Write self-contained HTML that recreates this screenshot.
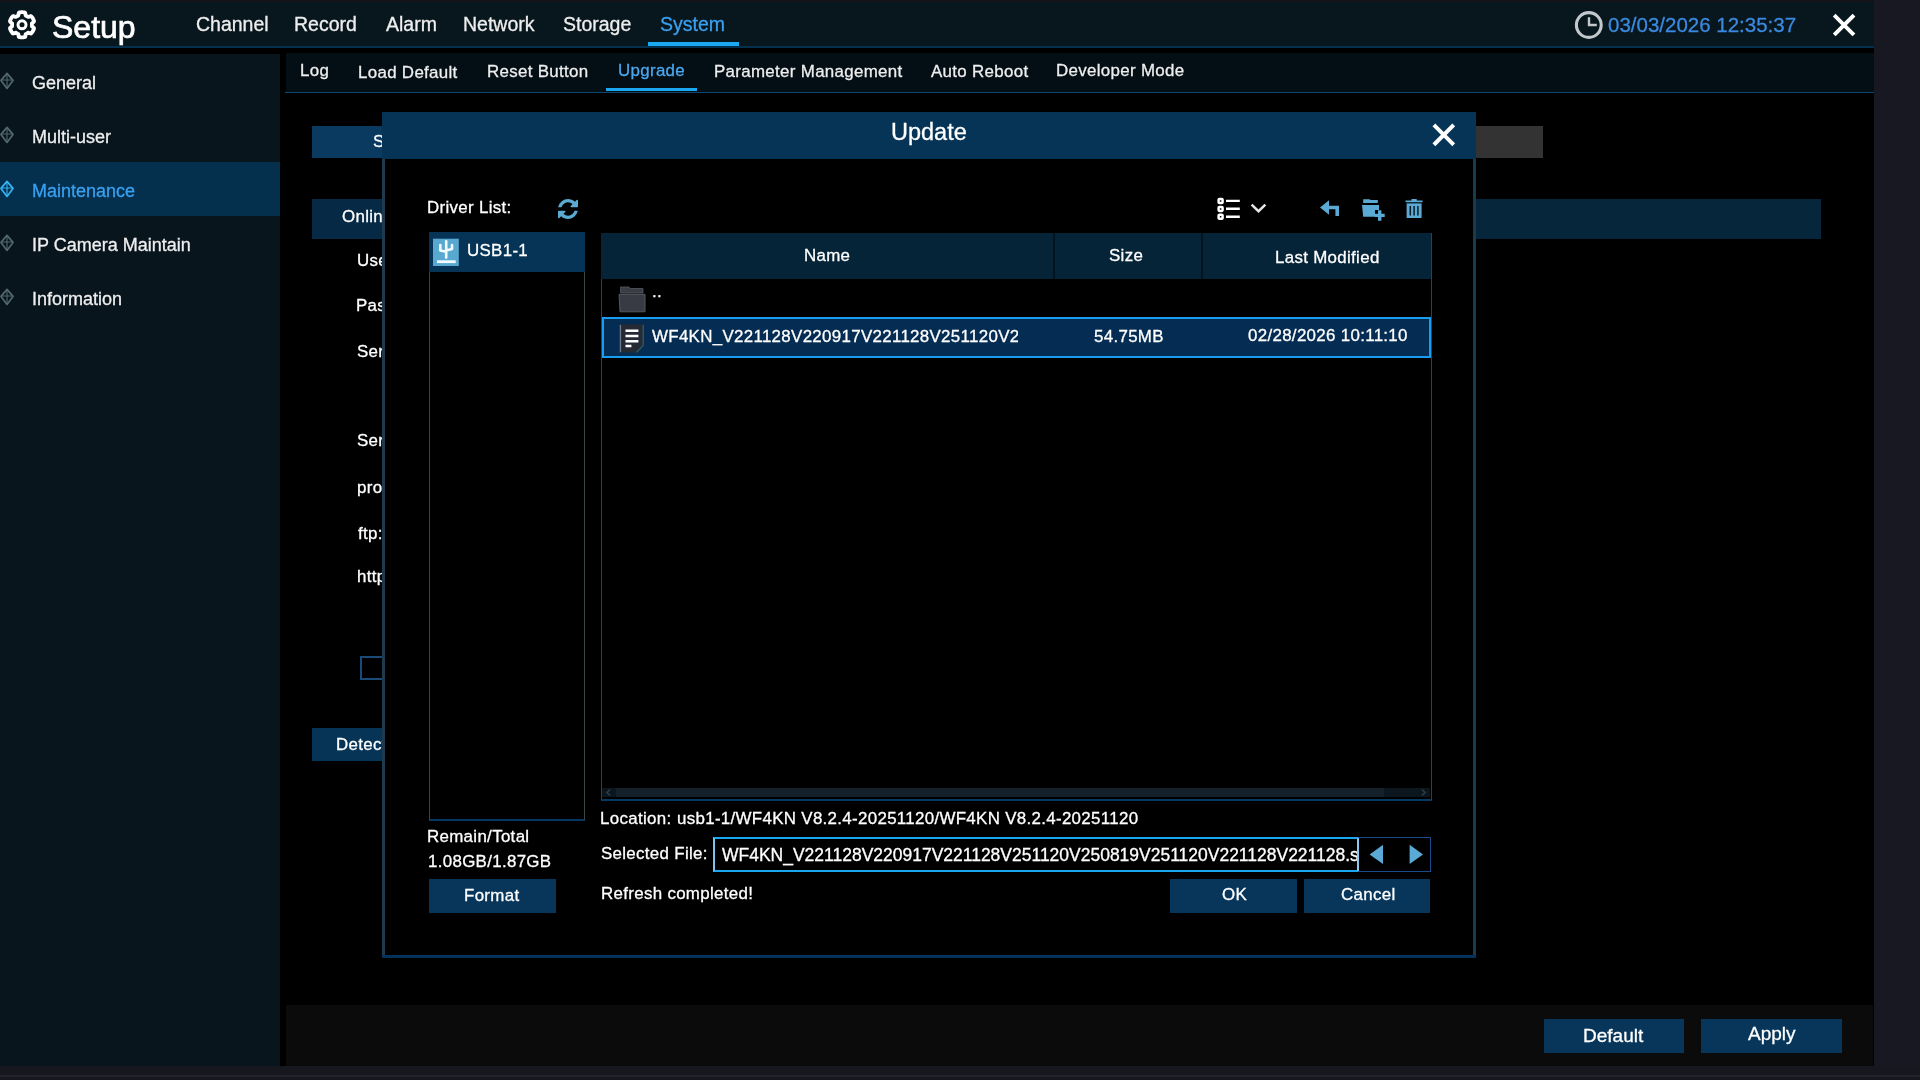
<!DOCTYPE html>
<html><head><meta charset="utf-8"><style>
html,body{margin:0;padding:0;width:1920px;height:1080px;overflow:hidden;background:#000}
body{position:relative;font-family:"Liberation Sans",sans-serif}
.t{position:absolute;white-space:pre;line-height:normal;will-change:transform}
svg{position:absolute;overflow:visible}
</style></head><body>
<div style="position:absolute;left:0px;top:0px;width:1920px;height:2px;background:#16121a;"></div>
<div style="position:absolute;left:0px;top:2px;width:1874px;height:44px;background:#08161d;"></div>
<div style="position:absolute;left:0px;top:46px;width:1874px;height:2px;background:#03304f;"></div>
<div style="position:absolute;left:1874px;top:0px;width:46px;height:1080px;background:#171822;"></div>
<div style="position:absolute;left:0px;top:54px;width:280px;height:1012px;background:#08151c;"></div>
<div style="position:absolute;left:0px;top:162px;width:280px;height:54px;background:#04304d;"></div>
<div style="position:absolute;left:286px;top:53px;width:1588px;height:39px;background:#040e15;"></div>
<div style="position:absolute;left:285px;top:92px;width:1589px;height:1px;background:#0d4672;"></div>
<div style="position:absolute;left:286px;top:1005px;width:1587px;height:61px;background:#0b0b0b;"></div>
<div style="position:absolute;left:0px;top:1066px;width:1920px;height:14px;background:#17171f;"></div>
<div style="position:absolute;left:0px;top:1075px;width:1920px;height:2px;background:#23232c;"></div>
<div class="t" style="left:52.20px;top:9.04px;font-size:32px;color:#ffffff;-webkit-text-stroke:0.3px #ffffff;letter-spacing:0px;-webkit-text-stroke:0.7px #fff">Setup</div>
<div class="t" style="left:195.89px;top:12.95px;font-size:19.5px;color:#eeeeee;-webkit-text-stroke:0.3px #eeeeee;letter-spacing:0px;">Channel</div>
<div class="t" style="left:293.68px;top:12.95px;font-size:19.5px;color:#eeeeee;-webkit-text-stroke:0.3px #eeeeee;letter-spacing:0px;">Record</div>
<div class="t" style="left:385.60px;top:12.95px;font-size:19.5px;color:#eeeeee;-webkit-text-stroke:0.3px #eeeeee;letter-spacing:0px;">Alarm</div>
<div class="t" style="left:463.28px;top:12.95px;font-size:19.5px;color:#eeeeee;-webkit-text-stroke:0.3px #eeeeee;letter-spacing:0px;">Network</div>
<div class="t" style="left:563.39px;top:12.95px;font-size:19.5px;color:#eeeeee;-webkit-text-stroke:0.3px #eeeeee;letter-spacing:0px;">Storage</div>
<div class="t" style="left:660.39px;top:12.95px;font-size:19.5px;color:#3aa0f0;-webkit-text-stroke:0.3px #3aa0f0;letter-spacing:0px;">System</div>
<div style="position:absolute;left:648px;top:42px;width:91px;height:4px;background:#1aa8f0;"></div>
<div class="t" style="left:1608.36px;top:12.95px;font-size:20.5px;color:#3a8ae0;-webkit-text-stroke:0.3px #3a8ae0;letter-spacing:0px;">03/03/2026 12:35:37</div>
<div class="t" style="left:300.28px;top:61.11px;font-size:16.9px;color:#eeeeee;-webkit-text-stroke:0.3px #eeeeee;letter-spacing:0.32px;">Log</div>
<div class="t" style="left:357.88px;top:62.91px;font-size:16.9px;color:#eeeeee;-webkit-text-stroke:0.3px #eeeeee;letter-spacing:0.32px;">Load Default</div>
<div class="t" style="left:487.08px;top:62.21px;font-size:16.9px;color:#eeeeee;-webkit-text-stroke:0.3px #eeeeee;letter-spacing:0.32px;">Reset Button</div>
<div class="t" style="left:618.14px;top:60.71px;font-size:16.9px;color:#4aa8f0;-webkit-text-stroke:0.3px #4aa8f0;letter-spacing:0.32px;">Upgrade</div>
<div class="t" style="left:713.98px;top:61.71px;font-size:16.9px;color:#eeeeee;-webkit-text-stroke:0.3px #eeeeee;letter-spacing:0.32px;">Parameter Management</div>
<div class="t" style="left:931.25px;top:62.21px;font-size:16.9px;color:#eeeeee;-webkit-text-stroke:0.3px #eeeeee;letter-spacing:0.32px;">Auto Reboot</div>
<div class="t" style="left:1056.18px;top:61.21px;font-size:16.9px;color:#eeeeee;-webkit-text-stroke:0.3px #eeeeee;letter-spacing:0.32px;">Developer Mode</div>
<div style="position:absolute;left:606px;top:88px;width:91px;height:3px;background:#1aa8f0;"></div>
<div class="t" style="left:32.46px;top:72.61px;font-size:18px;color:#eeeeee;-webkit-text-stroke:0.3px #eeeeee;letter-spacing:0px;">General</div>
<div class="t" style="left:31.89px;top:127.11px;font-size:18px;color:#eeeeee;-webkit-text-stroke:0.3px #eeeeee;letter-spacing:0px;">Multi-user</div>
<div class="t" style="left:31.89px;top:181.21px;font-size:18px;color:#3aa0f0;-webkit-text-stroke:0.3px #3aa0f0;letter-spacing:0px;">Maintenance</div>
<div class="t" style="left:31.89px;top:235.21px;font-size:18px;color:#eeeeee;-webkit-text-stroke:0.3px #eeeeee;letter-spacing:0px;">IP Camera Maintain</div>
<div class="t" style="left:31.89px;top:289.11px;font-size:18px;color:#eeeeee;-webkit-text-stroke:0.3px #eeeeee;letter-spacing:0px;">Information</div>
<div style="position:absolute;left:312px;top:126px;width:88px;height:32px;background:#0a3a5f;"></div>
<div style="position:absolute;left:1476px;top:126px;width:67px;height:32px;background:#333333;"></div>
<div class="t" style="left:373.07px;top:131.71px;font-size:16.9px;color:#ffffff;-webkit-text-stroke:0.3px #ffffff;letter-spacing:0.32px;">S</div>
<div style="position:absolute;left:312px;top:199px;width:88px;height:40px;background:#062a45;"></div>
<div style="position:absolute;left:1476px;top:199px;width:345px;height:40px;background:#06263c;"></div>
<div class="t" style="left:341.71px;top:206.71px;font-size:16.9px;color:#ffffff;-webkit-text-stroke:0.3px #ffffff;letter-spacing:0.32px;">Online</div>
<div class="t" style="left:356.74px;top:250.71px;font-size:16.9px;color:#ffffff;-webkit-text-stroke:0.3px #ffffff;letter-spacing:0.32px;">User</div>
<div class="t" style="left:356.48px;top:296.41px;font-size:16.9px;color:#ffffff;-webkit-text-stroke:0.3px #ffffff;letter-spacing:0.32px;">Pass</div>
<div class="t" style="left:357.27px;top:341.71px;font-size:16.9px;color:#ffffff;-webkit-text-stroke:0.3px #ffffff;letter-spacing:0.32px;">Server</div>
<div class="t" style="left:357.27px;top:431.41px;font-size:16.9px;color:#ffffff;-webkit-text-stroke:0.3px #ffffff;letter-spacing:0.32px;">Server</div>
<div class="t" style="left:356.74px;top:478.01px;font-size:16.9px;color:#ffffff;-webkit-text-stroke:0.3px #ffffff;letter-spacing:0.32px;">proto</div>
<div class="t" style="left:357.80px;top:523.91px;font-size:16.9px;color:#ffffff;-webkit-text-stroke:0.3px #ffffff;letter-spacing:0.32px;">ftp://</div>
<div class="t" style="left:356.74px;top:567.21px;font-size:16.9px;color:#ffffff;-webkit-text-stroke:0.3px #ffffff;letter-spacing:0.32px;">http</div>
<div style="position:absolute;left:360px;top:656px;width:40px;height:24px;background:transparent;border:2px solid #1a4a7a;box-sizing:border-box"></div>
<div style="position:absolute;left:312px;top:728px;width:88px;height:33px;background:#063457;"></div>
<div class="t" style="left:336.18px;top:734.71px;font-size:16.9px;color:#ffffff;-webkit-text-stroke:0.3px #ffffff;letter-spacing:0.32px;">Detect</div>
<div style="position:absolute;left:382px;top:112px;width:1094px;height:846px;background:#000;"></div>
<div style="position:absolute;left:382px;top:112px;width:1094px;height:47px;background:#063457;"></div>
<div style="position:absolute;left:382px;top:159px;width:3px;height:799px;background:#1d3a4e;"></div>
<div style="position:absolute;left:1473px;top:159px;width:3px;height:799px;background:#173c4e;"></div>
<div style="position:absolute;left:382px;top:955px;width:1094px;height:3px;background:#05325a;"></div>
<div class="t" style="left:890.73px;top:119.23px;font-size:23.5px;color:#ffffff;-webkit-text-stroke:0.3px #ffffff;letter-spacing:0px;">Update</div>
<div class="t" style="left:427.08px;top:197.71px;font-size:16.9px;color:#ffffff;-webkit-text-stroke:0.3px #ffffff;letter-spacing:0.32px;">Driver List:</div>
<div style="position:absolute;left:429px;top:232px;width:156px;height:589px;background:transparent;border:1px solid #3a4646;box-sizing:border-box;border-bottom:2px solid #053862"></div>
<div style="position:absolute;left:429px;top:232px;width:156px;height:40px;background:#063456;"></div>
<div class="t" style="left:466.74px;top:240.71px;font-size:16.9px;color:#ffffff;-webkit-text-stroke:0.3px #ffffff;letter-spacing:0.32px;">USB1-1</div>
<div class="t" style="left:427.28px;top:826.71px;font-size:16.9px;color:#ffffff;-webkit-text-stroke:0.3px #ffffff;letter-spacing:0.32px;">Remain/Total</div>
<div class="t" style="left:427.94px;top:852.11px;font-size:16.9px;color:#ffffff;-webkit-text-stroke:0.3px #ffffff;letter-spacing:0.32px;">1.08GB/1.87GB</div>
<div style="position:absolute;left:429px;top:879px;width:127px;height:34px;background:#07365a;"></div>
<div class="t" style="left:463.68px;top:885.71px;font-size:16.9px;color:#ffffff;-webkit-text-stroke:0.3px #ffffff;letter-spacing:0.32px;">Format</div>
<div style="position:absolute;left:601px;top:233px;width:831px;height:568px;background:transparent;border:1px solid #3a3e44;border-top:none;box-sizing:border-box;border-bottom:2px solid #063a60"></div>
<div style="position:absolute;left:601px;top:233px;width:830px;height:46px;background:#062438;"></div>
<div style="position:absolute;left:1053px;top:233px;width:2px;height:46px;background:#02141f;"></div>
<div style="position:absolute;left:1201px;top:233px;width:2px;height:46px;background:#02141f;"></div>
<div class="t" style="left:804.18px;top:246.31px;font-size:16.9px;color:#ffffff;-webkit-text-stroke:0.3px #ffffff;letter-spacing:0.32px;">Name</div>
<div class="t" style="left:1109.47px;top:246.01px;font-size:16.9px;color:#ffffff;-webkit-text-stroke:0.3px #ffffff;letter-spacing:0.32px;">Size</div>
<div class="t" style="left:1274.98px;top:247.51px;font-size:16.9px;color:#ffffff;-webkit-text-stroke:0.3px #ffffff;letter-spacing:0.32px;">Last Modified</div>
<div class="t" style="left:652.28px;top:282.21px;font-size:16.9px;color:#ffffff;-webkit-text-stroke:0.3px #ffffff;letter-spacing:0.32px;">..</div>
<div style="position:absolute;left:602px;top:317px;width:829px;height:41px;background:#052c52;border:2px solid #1a9cf0;box-sizing:border-box"></div>
<div style="position:absolute;left:600px;top:0;width:418px;height:1080px;overflow:hidden"><div style="position:absolute;left:-600px;top:0;width:1920px;height:1080px"><div class="t" style="left:652.20px;top:326.91px;font-size:16.9px;color:#ffffff;-webkit-text-stroke:0.3px #ffffff;letter-spacing:0.32px;">WF4KN_V221128V220917V221128V251120V250819V251120V221128V221128.sw</div></div></div>
<div class="t" style="left:1094.47px;top:326.71px;font-size:16.9px;color:#ffffff;-webkit-text-stroke:0.3px #ffffff;letter-spacing:0.32px;">54.75MB</div>
<div class="t" style="left:1247.97px;top:326.21px;font-size:16.9px;color:#ffffff;-webkit-text-stroke:0.3px #ffffff;letter-spacing:0.32px;">02/28/2026 10:11:10</div>
<div style="position:absolute;left:602px;top:788px;width:828px;height:9px;background:#0b161e;"></div>
<div style="position:absolute;left:616px;top:788px;width:768px;height:9px;background:#14212a;"></div>
<svg style="left:602px;top:787px" width="830" height="12"><path d="M8 2.5 L5 5.5 L8 8.5 M820 2.5 L823 5.5 L820 8.5" fill="none" stroke="#2c3e46" stroke-width="1.6"/></svg>
<div class="t" style="left:600.08px;top:809.11px;font-size:16.9px;color:#ffffff;-webkit-text-stroke:0.3px #ffffff;letter-spacing:0.32px;">Location:</div>
<div class="t" style="left:677.24px;top:809.11px;font-size:16.9px;color:#ffffff;-webkit-text-stroke:0.3px #ffffff;letter-spacing:0.32px;">usb1-1/WF4KN V8.2.4-20251120/WF4KN V8.2.4-20251120</div>
<div class="t" style="left:600.67px;top:844.11px;font-size:16.9px;color:#ffffff;-webkit-text-stroke:0.3px #ffffff;letter-spacing:0.32px;">Selected File:</div>
<div style="position:absolute;left:713px;top:837px;width:646px;height:35px;background:#000;border:2px solid #18a8f2;border-left-color:#7cc4ec;border-right-color:#8ccaee;box-sizing:border-box"></div>
<div style="position:absolute;left:715px;top:0;width:642px;height:1080px;overflow:hidden"><div style="position:absolute;left:-715px;top:0;width:1920px;height:1080px"><div class="t" style="left:722.30px;top:845.17px;font-size:17.49px;color:#ffffff;-webkit-text-stroke:0.3px #ffffff;letter-spacing:0px;">WF4KN_V221128V220917V221128V251120V250819V251120V221128V221128.sw</div></div></div>
<div style="position:absolute;left:1358px;top:837px;width:73px;height:35px;background:transparent;border:1px solid #1a4a8a;border-left:none;box-sizing:border-box"></div>
<div class="t" style="left:600.58px;top:884.31px;font-size:16.9px;color:#ffffff;-webkit-text-stroke:0.3px #ffffff;letter-spacing:0.32px;">Refresh completed!</div>
<div style="position:absolute;left:1170px;top:879px;width:127px;height:34px;background:#07365a;"></div>
<div class="t" style="left:1221.71px;top:884.91px;font-size:16.9px;color:#ffffff;-webkit-text-stroke:0.3px #ffffff;letter-spacing:0.32px;">OK</div>
<div style="position:absolute;left:1304px;top:879px;width:126px;height:34px;background:#07365a;"></div>
<div class="t" style="left:1340.71px;top:884.91px;font-size:16.9px;color:#ffffff;-webkit-text-stroke:0.3px #ffffff;letter-spacing:0.32px;">Cancel</div>
<div style="position:absolute;left:1544px;top:1019px;width:140px;height:34px;background:#07365a;"></div>
<div class="t" style="left:1582.82px;top:1024.71px;font-size:19px;color:#ffffff;-webkit-text-stroke:0.3px #ffffff;letter-spacing:0px;">Default</div>
<div style="position:absolute;left:1701px;top:1019px;width:141px;height:34px;background:#07365a;"></div>
<div class="t" style="left:1748.40px;top:1022.50px;font-size:19px;color:#ffffff;-webkit-text-stroke:0.3px #ffffff;letter-spacing:0px;">Apply</div>
<svg style="left:0;top:0" width="50" height="50"><g transform="translate(22,24.8)"><path d="M9.90 -0.00 L9.89 -0.52 L9.85 -1.03 L9.97 -1.58 L11.00 -2.34 L11.98 -3.21 L11.98 -3.89 L11.76 -4.52 L11.51 -5.12 L11.23 -5.72 L10.91 -6.30 L10.57 -6.86 L10.19 -7.41 L9.79 -7.93 L9.36 -8.43 L8.77 -8.77 L7.53 -8.36 L6.35 -7.84 L5.82 -8.01 L5.39 -8.30 L4.95 -8.57 L4.49 -8.82 L4.03 -9.04 L3.62 -9.42 L3.48 -10.70 L3.21 -11.98 L2.62 -12.32 L1.97 -12.44 L1.32 -12.53 L0.66 -12.58 L0.00 -12.60 L-0.66 -12.58 L-1.32 -12.53 L-1.97 -12.44 L-2.62 -12.32 L-3.21 -11.98 L-3.48 -10.70 L-3.62 -9.42 L-4.03 -9.04 L-4.49 -8.82 L-4.95 -8.57 L-5.39 -8.30 L-5.82 -8.01 L-6.35 -7.84 L-7.53 -8.36 L-8.77 -8.77 L-9.36 -8.43 L-9.79 -7.93 L-10.19 -7.41 L-10.57 -6.86 L-10.91 -6.30 L-11.23 -5.72 L-11.51 -5.12 L-11.76 -4.52 L-11.98 -3.89 L-11.98 -3.21 L-11.00 -2.34 L-9.97 -1.58 L-9.85 -1.03 L-9.89 -0.52 L-9.90 -0.00 L-9.89 0.52 L-9.85 1.03 L-9.97 1.58 L-11.00 2.34 L-11.98 3.21 L-11.98 3.89 L-11.76 4.52 L-11.51 5.12 L-11.23 5.72 L-10.91 6.30 L-10.57 6.86 L-10.19 7.41 L-9.79 7.93 L-9.36 8.43 L-8.77 8.77 L-7.53 8.36 L-6.35 7.84 L-5.82 8.01 L-5.39 8.30 L-4.95 8.57 L-4.49 8.82 L-4.03 9.04 L-3.62 9.42 L-3.48 10.70 L-3.21 11.98 L-2.62 12.32 L-1.97 12.44 L-1.32 12.53 L-0.66 12.58 L-0.00 12.60 L0.66 12.58 L1.32 12.53 L1.97 12.44 L2.62 12.32 L3.21 11.98 L3.48 10.70 L3.62 9.42 L4.03 9.04 L4.49 8.82 L4.95 8.57 L5.39 8.30 L5.82 8.01 L6.35 7.84 L7.53 8.36 L8.77 8.77 L9.36 8.43 L9.79 7.93 L10.19 7.41 L10.57 6.86 L10.91 6.30 L11.23 5.72 L11.51 5.12 L11.76 4.52 L11.98 3.89 L11.98 3.21 L11.00 2.34 L9.97 1.58 L9.85 1.03 L9.89 0.52Z" fill="none" stroke="#fff" stroke-width="3.8" stroke-linejoin="round"/><circle r="4" fill="none" stroke="#fff" stroke-width="3"/></g></svg>
<svg style="left:1570px;top:5px" width="40" height="40"><circle cx="18.8" cy="20" r="12.4" fill="none" stroke="#c2c8cc" stroke-width="3.1"/><path d="M19 12.3 V20 H26.8" fill="none" stroke="#c2c8cc" stroke-width="2.4"/></svg>
<svg style="left:1830px;top:11px" width="30" height="30"><path d="M5.6 5.6 L22.6 22.6 M22.6 5.6 L5.6 22.6" stroke="#fff" stroke-width="3.9" stroke-linecap="square"/></svg>
<svg style="left:0;top:71px" width="18" height="20"><path d="M7 2.4 L13 9.4 L7 17.4 L1 9.4 Z" fill="none" stroke="#52686c" stroke-width="1.7" stroke-linejoin="round"/><path d="M1.8 9 H12.2 M7 3 V17" fill="none" stroke="#52686c" stroke-width="1.1"/></svg>
<svg style="left:0;top:125px" width="18" height="20"><path d="M7 2.4 L13 9.4 L7 17.4 L1 9.4 Z" fill="none" stroke="#52686c" stroke-width="1.7" stroke-linejoin="round"/><path d="M1.8 9 H12.2 M7 3 V17" fill="none" stroke="#52686c" stroke-width="1.1"/></svg>
<svg style="left:0;top:179px" width="18" height="20"><path d="M7 2.4 L13 9.4 L7 17.4 L1 9.4 Z" fill="none" stroke="#38b4f4" stroke-width="1.7" stroke-linejoin="round"/><path d="M1.8 9 H12.2 M7 3 V17" fill="none" stroke="#38b4f4" stroke-width="1.1"/></svg>
<svg style="left:0;top:233px" width="18" height="20"><path d="M7 2.4 L13 9.4 L7 17.4 L1 9.4 Z" fill="none" stroke="#52686c" stroke-width="1.7" stroke-linejoin="round"/><path d="M1.8 9 H12.2 M7 3 V17" fill="none" stroke="#52686c" stroke-width="1.1"/></svg>
<svg style="left:0;top:287px" width="18" height="20"><path d="M7 2.4 L13 9.4 L7 17.4 L1 9.4 Z" fill="none" stroke="#52686c" stroke-width="1.7" stroke-linejoin="round"/><path d="M1.8 9 H12.2 M7 3 V17" fill="none" stroke="#52686c" stroke-width="1.1"/></svg>
<svg style="left:1430px;top:121px" width="28" height="28"><path d="M5.3 5.3 L22.3 22.3 M22.3 5.3 L5.3 22.3" stroke="#fff" stroke-width="4" stroke-linecap="square"/></svg>
<svg style="left:558px;top:199px" width="20" height="20" viewBox="0 0 1536 1536"><path fill="#5aaad2" d="M1511 928q0 5-1 7-64 268-268 434.5t-478 166.5q-146 0-282.5-55t-243.5-157l-129 129q-19 19-45 19t-45-19-19-45v-448q0-26 19-45t45-19h448q26 0 45 19t19 45-19 45l-137 137q71 66 161 102t187 36q134 0 250-65t186-179q11-17 53-117 8-23 30-23h192q13 0 22.5 9.5t9.5 22.5zm25-800v448q0 26-19 45t-45 19h-448q-26 0-45-19t-19-45 19-45l138-138q-148-137-349-137-134 0-250 65t-186 179q-11 17-53 117-8 23-30 23h-199q-13 0-22.5-9.5t-9.5-22.5v-7q65-268 270-434.5t480-166.5q146 0 284 55.5t245 156.5l130-129q19-19 45-19t45 19 19 45z"/></svg>
<svg style="left:432px;top:238px" width="28" height="30"><rect x="1" y="0.7" width="25.8" height="27.3" fill="#58a8d0"/><path d="M14.2 3.4 V19.6 M8.3 7 V12.6 L14.2 13.8 M20 7 V11 L14.2 12.6" fill="none" stroke="#f2fbff" stroke-width="2.6" stroke-linecap="round" stroke-linejoin="round"/><rect x="5" y="22.3" width="18.7" height="2.8" fill="#f2fbff"/></svg>
<svg style="left:1216px;top:196.4px" width="54" height="26"><g fill="none" stroke="#fff" stroke-width="2.5"><rect x="2.6" y="3" width="4" height="4" rx="0.8"/><rect x="2.6" y="10.9" width="4" height="4" rx="0.8"/><rect x="2.6" y="18.8" width="4" height="4" rx="0.8"/></g><g stroke="#fff" stroke-width="2.4"><path d="M10 4.9 H23.8 M10 12.8 H23.8 M10 20.7 H23.8"/></g><path d="M35.6 8.6 L42.5 15.2 L49.4 8.6" fill="none" stroke="#e6e6e6" stroke-width="2.5"/></svg>
<svg style="left:1318px;top:199px" width="24" height="20"><path d="M2 8.4 L11 1.3 V15.7 Z" fill="#5aaad5"/><path d="M10 8.5 H19.2 V17" fill="none" stroke="#5aaad5" stroke-width="3.6"/></svg>
<svg style="left:1361px;top:198px" width="26" height="24"><path d="M2.2 1.2 H8.4 L9.6 2 H16.8 V5 H2.2 Z" fill="#5aaad5"/><path d="M1 6.9 H18 V12 H14 V18.8 H2.2 Z" fill="#5aaad5"/><path d="M18.7 12.3 V22.7 M13.9 17.4 H23.7" stroke="#5aaad5" stroke-width="3.4"/></svg>
<svg style="left:1404px;top:198px" width="20" height="22"><path d="M1.6 2.6 H18.6 V4.2 H1.6 Z M7.5 1 H12.7 V2.8 H7.5 Z" fill="#5aaad5"/><path d="M2.6 5.4 H17.6 V20 H2.6 Z" fill="#5aaad5"/><path d="M6.3 8 V17.4 M10.1 8 V17.4 M13.9 8 V17.4" stroke="#0a1a22" stroke-width="1.5"/></svg>
<svg style="left:618px;top:286px" width="28" height="28"><path d="M2.5 1 H11 L12 2.5 H25 V7 H2.5 Z" fill="#3a3d45" stroke="#55585f" stroke-width="0.8"/><path d="M1 8.3 H27 V25.8 H2 Z" fill="#383b43" stroke="#5a5d64" stroke-width="0.9"/></svg>
<svg style="left:619px;top:324px" width="26" height="30"><path d="M1.2 0.6 H24.6 V21.5 L17.5 28.5 H1.2 Z" fill="#262a33"/><path d="M1.4 0.8 V28.3" stroke="#6e7a8c" stroke-width="1.3"/><path d="M24.2 0.8 V21.5 L17.5 28.3" fill="none" stroke="#2f5f6a" stroke-width="1.2"/><path d="M6.5 6.8 H19.4 M6.5 12 H19.4 M6.5 17.2 H19.4 M6.5 22 H12.4" stroke="#fff" stroke-width="2.6"/></svg>
<svg style="left:1365px;top:840px" width="66" height="30"><path d="M4.6 14.5 L18 4.8 V24 Z" fill="#5aaad5"/><path d="M44.6 4.8 L58 14.5 L44.6 24 Z" fill="#5aaad5"/></svg>
</body></html>
